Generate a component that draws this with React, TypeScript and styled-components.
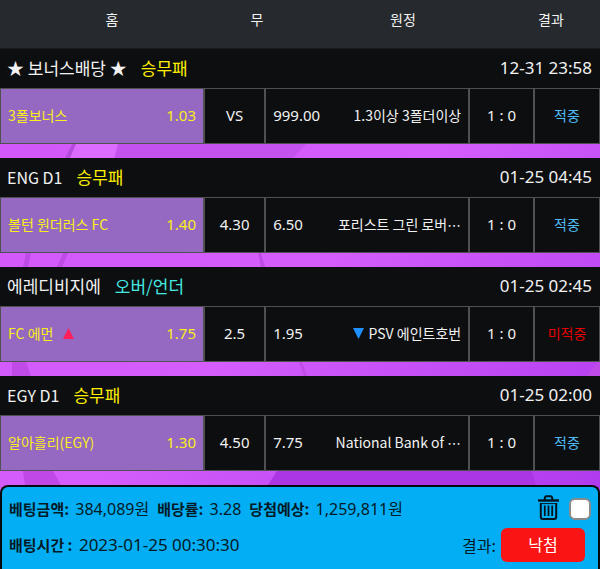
import React from 'react';
import styled, { createGlobalStyle } from 'styled-components';

const kr = "'Noto Sans CJK KR', 'Noto Sans', sans-serif";
const num = "'Noto Sans', 'Noto Sans CJK KR', sans-serif";

const GlobalStyle = createGlobalStyle`
  *, *::before, *::after { box-sizing: border-box; }
  html { background: #c955f5; }
  body { margin: 0; color: #f2f2f2; font-family: ${kr}; font-size: 14px; }
`;

const Page = styled.main`
  position: relative;
  isolation: isolate;
`;

const Backdrop = styled.svg`
  position: absolute;
  inset: 0;
  z-index: -1;
  width: 100%;
  height: 100%;
`;

const ColumnHeads = styled.header`
  display: grid;
  grid-template-columns: 224fr 66fr 226fr 70fr 14fr;
  height: 49px;
  padding-top: 9px;
  background: #26292d;
  border-bottom: 1px solid #1a1b1d;
  line-height: 20px;
  text-align: center;
`;

const MatchList = styled.div`
  display: flex;
  flex-direction: column;
  gap: 14px;
  margin-bottom: 14px;
`;

const MatchTable = styled.table`
  width: 100%;
  table-layout: fixed;
  border-spacing: 0;
  background: #0d0e10;
`;

const TitleCell = styled.th`
  height: 39px;
  padding: 0 8px 2px 7px;
  font-weight: 400;
  text-align: left;
`;

const TitleLine = styled.div`
  display: flex;
  align-items: center;
  gap: 14px;
  line-height: 24px;
`;

const League = styled.span<{ $latin?: boolean }>`
  font-size: ${(p) => (p.$latin ? 16 : 17)}px;
`;

const Market = styled.span<{ $over?: boolean }>`
  color: ${(p) => (p.$over ? '#45e8e0' : '#fff000')};
  font-size: 17px;
`;

const Kickoff = styled.time`
  margin-left: auto;
  font-family: ${num};
  font-size: 17px;
`;

const Cell = styled.td<{ $tone?: 'picked' | 'hit' | 'miss' }>`
  height: 56px;
  padding: 0 7px 2px;
  border: 1px solid #505053;
  text-align: center;
  white-space: nowrap;
  background: ${(p) => (p.$tone === 'picked' ? '#9568c2' : 'transparent')};
  color: ${(p) =>
    p.$tone === 'picked' ? '#f7ee1c' : p.$tone === 'hit' ? '#4fbcf5' : p.$tone === 'miss' ? '#e60000' : 'inherit'};
`;

const Side = styled.div`
  display: flex;
  align-items: center;
  justify-content: space-between;
`;

const Team = styled.span`
  display: flex;
  align-items: center;
  gap: 10px;
  line-height: 20px;
`;

const AwayTeam = styled(Team)`
  gap: 5px;
`;

const Ellipsis = styled.span`
  display: inline-block;
  font-family: 'DejaVu Sans', sans-serif;
  font-size: 14px;
`;

const Odds = styled.span`
  font-family: ${num};
  font-size: 15px;
`;

const Arrow = styled.svg`
  display: block;
  width: 11px;
  height: 11px;
`;

const Slip = styled.section`
  display: flex;
  flex-direction: column;
  gap: 2px;
  padding: 5px 7px 7px;
  border: 2px solid #05090d;
  border-bottom: 0;
  border-radius: 8px 8px 0 0;
  background: #03aef4;
  color: #041a26;
`;

const SlipRow = styled.div`
  display: flex;
  align-items: center;
  height: 34px;
  line-height: 24px;
  white-space: nowrap;
`;

const Fact = styled.span<{ $wide?: boolean }>`
  margin-right: 8px;
  font-family: ${num};
  font-size: ${(p) => (p.$wide ? 17 : 16)}px;
`;

const Label = styled.b`
  margin-right: 2px;
  font-family: ${kr};
  font-size: 15px;
  font-weight: 700;
`;

const Actions = styled.div`
  display: flex;
  align-items: center;
  gap: 10px;
  margin-left: auto;
`;

const IconButton = styled.button`
  display: flex;
  padding: 0 0 4px;
  border: 0;
  background: none;
  color: #04141d;
  cursor: pointer;
`;

const Check = styled.input`
  appearance: none;
  width: 22px;
  height: 22px;
  margin: 0;
  border: 2px solid #8b8b8b;
  border-radius: 6px;
  background: #fff;
  &:checked { background: #1677d2; }
`;

const Outcome = styled.div`
  display: flex;
  align-items: center;
  gap: 5px;
  margin-left: auto;
  padding-right: 6px;
  font-size: 16px;
`;

const OutcomeButton = styled.button`
  width: 84px;
  height: 34px;
  padding: 0 0 2px;
  border: 0;
  border-radius: 6px;
  background: #fb1414;
  color: #fff;
  font-family: ${kr};
  font-size: 16px;
  cursor: pointer;
`;

type Match = {
  league: string;
  latin?: boolean;
  market: string;
  over?: boolean;
  time: string;
  home: string;
  odds: [string, string, string];
  away: string;
  cut?: boolean;
  result: string;
};

const matches: Match[] = [
  { league: '★ 보너스배당 ★', market: '승무패', time: '12-31 23:58', home: '3폴보너스', odds: ['1.03', 'VS', '999.00'], away: '1.3이상 3폴더이상', result: '적중' },
  { league: 'ENG D1', latin: true, market: '승무패', time: '01-25 04:45', home: '볼턴 원더러스 FC', odds: ['1.40', '4.30', '6.50'], away: '포리스트 그린 로버', cut: true, result: '적중' },
  { league: '에레디비지에', market: '오버/언더', over: true, time: '01-25 02:45', home: 'FC 에먼', odds: ['1.75', '2.5', '1.95'], away: 'PSV 에인트호번', result: '미적중' },
  { league: 'EGY D1', latin: true, market: '승무패', time: '01-25 02:00', home: '알아흘리(EGY)', odds: ['1.30', '4.50', '7.75'], away: 'National Bank of ', cut: true, result: '적중' },
];

function MatchBlock({ match: m }: { match: Match }) {
  return (
    <MatchTable>
      <colgroup>
        <col style={{ width: '34%' }} />
        <col style={{ width: '10.2%' }} />
        <col style={{ width: '34%' }} />
        <col style={{ width: '10.8%' }} />
        <col style={{ width: '11%' }} />
      </colgroup>
      <thead>
        <tr>
          <TitleCell colSpan={5}>
            <TitleLine>
              <League $latin={m.latin}>{m.league}</League>
              <Market $over={m.over}>{m.market}</Market>
              <Kickoff>{m.time}</Kickoff>
            </TitleLine>
          </TitleCell>
        </tr>
      </thead>
      <tbody>
        <tr>
          <Cell $tone="picked">
            <Side>
              <Team>
                {m.home}
                {m.over && (
                  <Arrow viewBox="0 0 11 11" aria-hidden="true"><path d="M5.5 0 11 11H0z" fill="#ff1f5a" /></Arrow>
                )}
              </Team>
              <Odds>{m.odds[0]}</Odds>
            </Side>
          </Cell>
          <Cell><Odds>{m.odds[1]}</Odds></Cell>
          <Cell>
            <Side>
              <Odds>{m.odds[2]}</Odds>
              <AwayTeam>
                {m.over && (
                  <Arrow viewBox="0 0 11 11" aria-hidden="true"><path d="M0 0H11L5.5 11z" fill="#1e90ff" /></Arrow>
                )}
                <span>{m.away}{m.cut && <Ellipsis>⋯</Ellipsis>}</span>
              </AwayTeam>
            </Side>
          </Cell>
          <Cell><Odds>1 : 0</Odds></Cell>
          <Cell $tone={m.result === '적중' ? 'hit' : 'miss'}>{m.result}</Cell>
        </tr>
      </tbody>
    </MatchTable>
  );
}

export default function App() {
  return (
    <Page>
      <GlobalStyle />
      <Backdrop viewBox="0 0 600 569" preserveAspectRatio="none" aria-hidden="true">
        <defs>
          <linearGradient id="glow" x1="0" y1="0" x2="1" y2="1">
            <stop offset="0" stopColor="#d356fa" />
            <stop offset="0.5" stopColor="#d45dfb" />
            <stop offset="1" stopColor="#aa35ec" />
          </linearGradient>
        </defs>
        <rect width="600" height="569" fill="url(#glow)" />
        <path d="M65 158 74 144H118L114 158z" fill="#dc6bff" />
        <path d="M65 158 72 144H76L70 158z" fill="#b74bdd" />
        <path d="M118 144H306L293 158H115z" fill="#c452ed" />
        <path d="M26 253H31L28 267H23zM63 253H68L62 267H57zM258 253H261L265 267H261z" fill="#bd4be5" />
        <path d="M12 362H26L31 376H12zM598 362H600V376H587zM299 362 302 362 307 376H304z" fill="#c04be6" />
        <path d="M23 471H53L61 485H25z" fill="#bf48e6" />
        <path d="M277 471H532L536 485H268z" fill="#aa37e3" />
      </Backdrop>
      <ColumnHeads>
        <span>홈</span>
        <span>무</span>
        <span>원정</span>
        <span>결과</span>
      </ColumnHeads>
      <MatchList>
        {matches.map((m) => <MatchBlock key={m.league} match={m} />)}
      </MatchList>
      <Slip>
        <SlipRow>
          <Fact><Label>베팅금액:</Label> 384,089원</Fact>
          <Fact><Label>배당률:</Label> 3.28</Fact>
          <Fact><Label>당첨예상:</Label> 1,259,811원</Fact>
          <Actions>
            <IconButton type="button" aria-label="삭제">
              <svg width="21" height="25" viewBox="0 0 21 25" fill="none" stroke="currentColor" strokeWidth="2" strokeLinejoin="round">
                <path d="M0 5.5H21" strokeWidth="2.4" />
                <path d="M6.5 5 7 2.2Q7.2 1.2 8.2 1.2H12.8Q13.8 1.2 14 2.2L14.5 5" />
                <path d="M2.8 8V22Q2.8 24 4.8 24H16.2Q18.2 24 18.2 22V8" />
                <path d="M2.8 8.6H18.2" strokeWidth="1" />
                <path d="M6.8 10.5V21M10.5 10.5V21M14.2 10.5V21" strokeWidth="1.8" />
              </svg>
            </IconButton>
            <Check type="checkbox" aria-label="선택" />
          </Actions>
        </SlipRow>
        <SlipRow>
          <Fact $wide><Label>배팅시간 :</Label> 2023-01-25 00:30:30</Fact>
          <Outcome>
            <span>결과:</span>
            <OutcomeButton type="button">낙첨</OutcomeButton>
          </Outcome>
        </SlipRow>
      </Slip>
    </Page>
  );
}
